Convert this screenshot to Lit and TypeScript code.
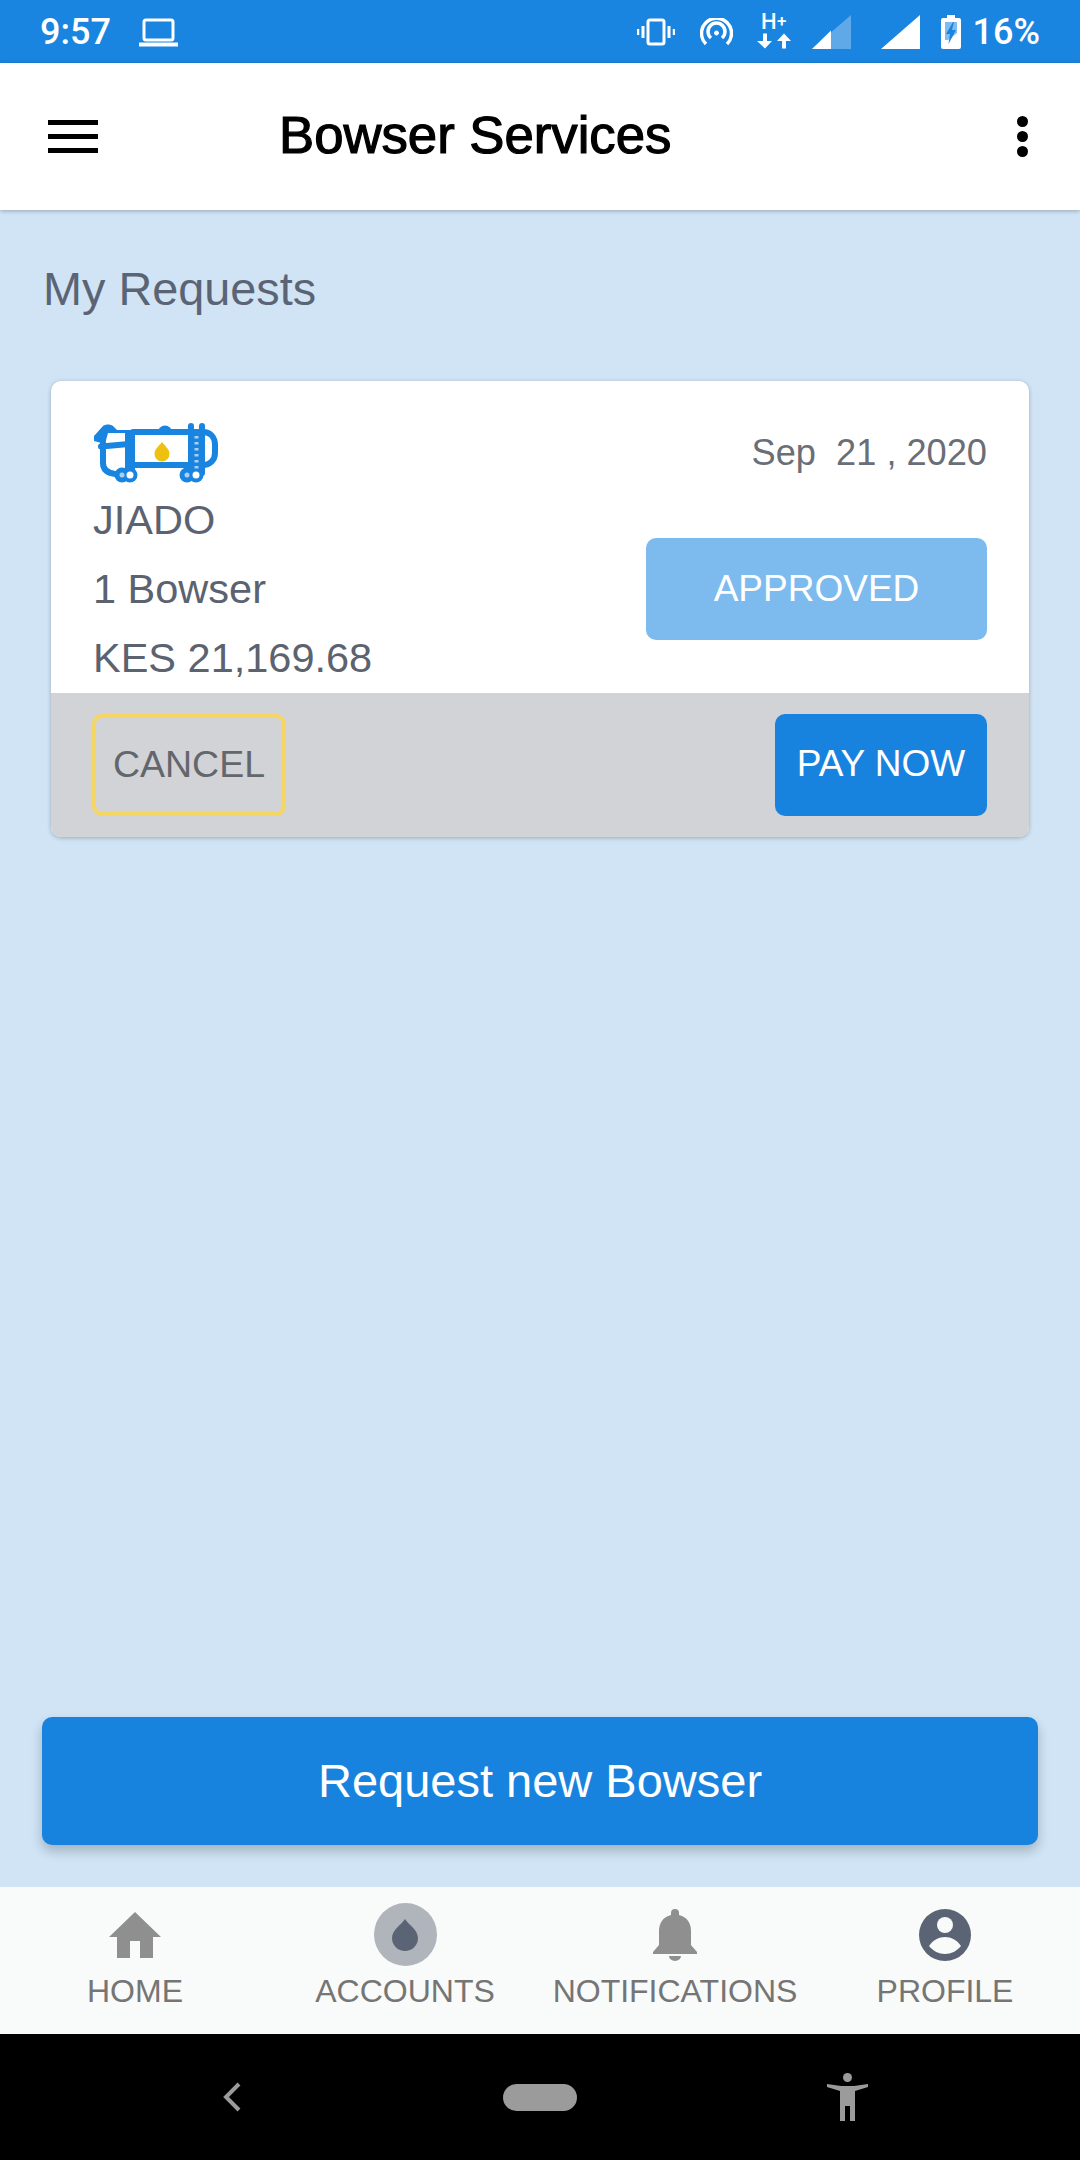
import {LitElement, css, html, svg} from 'lit';
import {customElement} from 'lit/decorators.js';

// Tanker logo, drawn in its own 126x60 box
const tanker = svg`
  <g fill="none" stroke="#1a85e0" stroke-width="6" stroke-linejoin="round" stroke-linecap="round">
    <path d="M40 9H110C118 9 122 15 122 22V30C122 37 117 42 110 42H40" />
    <path d="M10 20V40C10 46 14 50 22 51" />
    <path d="M8 23.500L36 21" />
    <path d="M98 3V50M109 3V50" />
  </g>
  <g fill="#1a85e0">
    <path d="M1 13L10 3C13 1 17 1 20 3L24 7H42V47H32V10H15L12 21L1 18Z" />
    <path d="M65 9a7 6.500 0 0 1 14 0Z" />
    <rect x="98" y="10" width="11" height="38" />
    <circle cx="29" cy="52" r="7.500" />
    <circle cx="37" cy="52" r="7.500" />
    <circle cx="94" cy="52" r="7.500" />
    <circle cx="103" cy="52" r="7.500" />
  </g>
  <g fill="#a8d0f2">
    <rect x="101.500" y="13" width="4" height="2.500" />
    <rect x="101.500" y="19" width="4" height="2.500" />
    <rect x="101.500" y="25" width="4" height="2.500" />
    <rect x="101.500" y="31" width="4" height="2.500" />
    <rect x="101.500" y="37" width="4" height="2.500" />
    <rect x="101.500" y="43" width="4" height="2.500" />
    <circle cx="29" cy="52" r="2.500" />
    <circle cx="94" cy="52" r="2.500" />
  </g>
  <circle cx="37" cy="52" r="3.500" fill="#fff" />
  <circle cx="103" cy="52" r="3.500" fill="#fff" />
  <path d="M69 19C66 23 61.500 26 61.500 31a7.500 7.500 0 0 0 15 0C76.500 26 72 23 69 19Z" fill="#eec010" />
`;

@customElement('app-root')
export class AppRoot extends LitElement {
  static override styles = css`
    :host {
      display: block;
    }

    .page {
      display: flex;
      flex-direction: column;
      width: 1080px;
      height: 2160px;
      background: #d0e4f5;
      font-family: 'Liberation Sans', Arial, sans-serif;
    }

    svg {
      display: block;
    }

    /* status bar */
    .status {
      display: flex;
      align-items: center;
      flex: none;
      height: 63px;
      padding: 0 40px;
      background: #1a85e0;
      color: #fff;
      font-family: Roboto, sans-serif;
      font-weight: 500;
      font-size: 36px;
      box-sizing: border-box;
    }

    .status .time {
      margin-right: 28px;
    }

    .status .right {
      display: flex;
      align-items: center;
      margin-left: auto;
    }

    .status .pct {
      margin-left: 12px;
    }

    /* app bar */
    .appbar {
      position: relative;
      display: flex;
      align-items: center;
      flex: none;
      height: 147px;
      padding: 0 52px 0 48px;
      box-sizing: border-box;
      background: #fff;
      box-shadow: 0 1px 4px rgba(0, 0, 0, 0.28);
    }

    .burger {
      display: flex;
      flex-direction: column;
      gap: 9px;
      width: 50px;
    }

    .burger span {
      height: 5px;
      background: #000;
    }

    .appbar h1 {
      margin: 0 0 5px 181px;
      font-size: 52.700px;
      font-weight: 400;
      -webkit-text-stroke: 1.200px #000;
      color: #000;
    }

    .dots {
      display: flex;
      flex-direction: column;
      gap: 4px;
      margin-left: auto;
    }

    .dots span {
      width: 11px;
      height: 11px;
      border-radius: 50%;
      background: #000;
    }

    /* main */
    .main {
      display: flex;
      flex-direction: column;
      flex: 1;
      padding: 49px 42px 42px;
    }

    .heading {
      margin-left: 1px;
      font-size: 46.800px;
      line-height: 60px;
      color: #5b6474;
    }

    .card {
      display: flex;
      flex-direction: column;
      margin: 62px 9px 0;
      border-radius: 10px;
      overflow: hidden;
      background: #fff;
      box-shadow: 0 1px 4px rgba(0, 0, 0, 0.25);
    }

    .card-body {
      display: flex;
      justify-content: space-between;
      height: 312px;
      box-sizing: border-box;
      padding: 42px 42px 0 42px;
    }

    .details {
      color: #5b6270;
      font-size: 41.500px;
      line-height: 69px;
    }

    .details svg {
      margin-bottom: 2px;
    }

    .side {
      display: flex;
      flex-direction: column;
      align-items: flex-end;
    }

    .date {
      font-size: 36.200px;
      line-height: 60px;
      color: #6a6e76;
      white-space: pre;
    }

    .badge {
      display: flex;
      align-items: center;
      justify-content: center;
      width: 341px;
      height: 102px;
      margin-top: 55px;
      border-radius: 10px;
      background: #7dbbee;
      color: #fff;
      font-size: 37px;
    }

    .card-foot {
      display: flex;
      justify-content: space-between;
      padding: 21px 42px 21px 41px;
      background: #d2d3d7;
    }

    .btn {
      display: flex;
      align-items: center;
      justify-content: center;
      height: 102px;
      box-sizing: border-box;
      padding-bottom: 2px;
      border-radius: 10px;
      font-size: 37.500px;
    }

    .btn.cancel {
      width: 194px;
      border: 4px solid #f6d662;
      color: #63666b;
    }

    .btn.pay {
      width: 212px;
      background: #1883df;
      color: #fff;
      font-size: 37px;
    }

    .request {
      display: flex;
      align-items: center;
      justify-content: center;
      height: 128px;
      box-sizing: border-box;
      padding-bottom: 2px;
      margin-top: auto;
      border-radius: 10px;
      background: #1883df;
      color: #fff;
      font-size: 47px;
      box-shadow: 0 6px 12px rgba(0, 0, 0, 0.22);
    }

    /* bottom nav */
    .nav {
      display: grid;
      grid-template-columns: repeat(4, 1fr);
      flex: none;
      height: 147px;
      background: #f9fafa;
    }

    .nav-item {
      display: flex;
      flex-direction: column;
      align-items: center;
      padding-top: 16px;
      color: #757575;
      font-size: 32px;
    }

    .nav-icon {
      display: flex;
      align-items: center;
      justify-content: center;
      width: 63px;
      height: 63px;
      margin-bottom: 7px;
    }

    .nav-icon.active {
      border-radius: 50%;
      background: #b0b4bb;
    }

    /* system nav */
    .sysnav {
      position: relative;
      display: flex;
      align-items: center;
      flex: none;
      height: 126px;
      background: #000;
    }

    .sysnav .back {
      margin-left: 222px;
    }

    .sysnav .pill {
      width: 74px;
      height: 27px;
      margin-left: 261px;
      border-radius: 14px;
      background: #9b9b9b;
    }

    .sysnav .a11y {
      margin-left: 250px;
    }
  `;

  override render() {
    return html`
      <div class="page">
        <div class="status">
          <span class="time">9:57</span>
          <svg width="39" height="30" viewBox="0 0 39 30" fill="none" stroke="#fff">
            <rect x="5" y="3" width="29" height="20" rx="2" stroke-width="3" />
            <path d="M0 27.500H39" stroke-width="4" />
          </svg>
          <div class="right">
            <svg width="38" height="28" viewBox="0 0 38 28" fill="none" stroke="#fff">
              <rect x="11" y="2" width="16" height="24" rx="2" stroke-width="3" />
              <path d="M6 8V20M32 8V20" stroke-width="3" />
              <path d="M1 11V17M37 11V17" stroke-width="2.500" />
            </svg>
            <svg style="margin-left:25px" width="33" height="28" viewBox="0 0 33 28" fill="none" stroke="#fff" stroke-width="3.500">
              <path d="M6 26A15 15 0 1 1 27 26" />
              <path d="M11 20A8.500 8.500 0 1 1 22 20" />
              <circle cx="16.500" cy="15" r="2" fill="#fff" stroke-width="1" />
            </svg>
            <svg style="margin-left:24px" width="34" height="50" viewBox="0 -10 34 50" fill="#fff">
              <text x="4" y="11.500" font-family="Roboto, sans-serif" font-size="22" font-weight="500">H</text>
              <text x="20" y="9.500" font-family="Roboto, sans-serif" font-size="17" font-weight="500">+</text>
              <path d="M6 16.500H10V24H15L8 31.500L0 24H6Z" />
              <path d="M25 31.500H29V24H34L27 16.500L20 24H25Z" />
            </svg>
            <svg style="margin-left:21px" width="39" height="34" viewBox="0 0 39 34">
              <path d="M39 0V34H0Z" fill="#fff" fill-opacity="0.3" />
              <path d="M19 15.500V34H0Z" fill="#fff" />
            </svg>
            <svg style="margin-left:30px" width="39" height="34" viewBox="0 0 39 34">
              <path d="M39 0V34H0Z" fill="#fff" />
            </svg>
            <svg style="margin-left:21px" width="20" height="34" viewBox="0 0 20 34">
              <path d="M6 0H14V3H18A2 2 0 0 1 20 5V32A2 2 0 0 1 18 34H2A2 2 0 0 1 0 32V5A2 2 0 0 1 2 3H6Z" fill="#fff" />
              <path d="M4 7H16V18L7 25H4Z" fill="#1a85e0" fill-opacity="0.55" />
              <path d="M12 7L5 19H9L7.500 29L15 15H11L13 7Z" fill="#1a85e0" />
            </svg>
            <span class="pct">16%</span>
          </div>
        </div>

        <div class="appbar">
          <div class="burger"><span></span><span></span><span></span></div>
          <h1>Bowser Services</h1>
          <div class="dots"><span></span><span></span><span></span></div>
        </div>

        <div class="main">
          <div class="heading">My Requests</div>
          <div class="card">
            <div class="card-body">
              <div class="details">
                <svg width="126" height="60" viewBox="0 0 126 60">${tanker}</svg>
                <div>JIADO</div>
                <div>1 Bowser</div>
                <div>KES 21,169.68</div>
              </div>
              <div class="side">
                <div class="date">Sep  21 , 2020</div>
                <div class="badge">APPROVED</div>
              </div>
            </div>
            <div class="card-foot">
              <div class="btn cancel">CANCEL</div>
              <div class="btn pay">PAY NOW</div>
            </div>
          </div>
          <div class="request">Request new Bowser</div>
        </div>

        <div class="nav">
          <div class="nav-item">
            <div class="nav-icon">
              <svg width="52" height="46" viewBox="0 0 52 46" fill="#8f8f8f">
                <path d="M26 0L52 25H44V46H31V29H21V46H8V25H0Z" />
              </svg>
            </div>
            HOME
          </div>
          <div class="nav-item">
            <div class="nav-icon active">
              <svg width="26" height="32" viewBox="0 0 26 32" fill="#5b6474">
                <path d="M13 0C9 6 0 11 0 19a13 13 0 0 0 26 0C26 11 17 6 13 0Z" />
              </svg>
            </div>
            ACCOUNTS
          </div>
          <div class="nav-item">
            <div class="nav-icon">
              <svg width="44" height="52" viewBox="0 0 44 52" fill="#8f8f8f">
                <path d="M22 0a4 4 0 0 1 4 4V6C34 8 38 14 38 22V36L44 43V45H0V43L6 36V22C6 14 10 8 18 6V4A4 4 0 0 1 22 0Z" />
                <path d="M16 47H28A6 5 0 0 1 16 47Z" />
              </svg>
            </div>
            NOTIFICATIONS
          </div>
          <div class="nav-item">
            <div class="nav-icon">
              <svg width="52" height="52" viewBox="0 0 52 52">
                <circle cx="26" cy="26" r="26" fill="#5b6474" />
                <circle cx="26" cy="16" r="8" fill="#f9fafa" />
                <path d="M10 37C14 31 20 28 26 28S38 31 42 37C38 42 32 45 26 45S14 42 10 37Z" fill="#f9fafa" />
              </svg>
            </div>
            PROFILE
          </div>
        </div>

        <div class="sysnav">
          <svg class="back" width="20" height="30" viewBox="0 0 20 30" fill="none" stroke="#9b9b9b" stroke-width="4">
            <path d="M17 2L4 15L17 28" />
          </svg>
          <div class="pill"></div>
          <svg class="a11y" width="41" height="48" viewBox="0 0 41 48" fill="#9b9b9b">
            <circle cx="20.500" cy="4.500" r="4.500" />
            <path d="M0 11L14 13H27L41 11V14L28 18V48H23V33H18V48H13V18L0 14Z" />
          </svg>
        </div>
      </div>
    `;
  }
}
